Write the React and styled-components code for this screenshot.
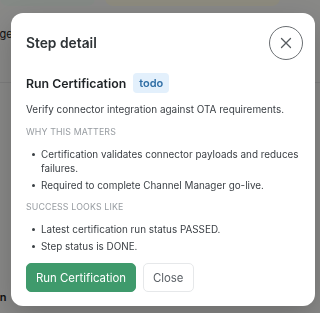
import React from 'react'
import styled, { createGlobalStyle } from 'styled-components'

const Global = createGlobalStyle`
  html, body { margin: 0; padding: 0; }
  body {
    width: 320px;
    height: 313px;
    overflow: hidden;
    font-family: Inter, "Noto Sans", sans-serif;
    background: #fff;
  }
`

const Page = styled.div`
  width: 320px;
  height: 313px;
  display: flex;
  flex-direction: column;
  background: #f7f7f5;
  overflow: hidden;
`

const TopBar = styled.div`
  display: flex;
  gap: 10px;
  height: 12px;
  margin-top: -6px;
`

const TopCard = styled.div`
  width: ${p => p.w}px;
  background: ${p => p.bg};
  border-radius: 0 0 8px 8px;
`

const SideList = styled.div`
  flex: 1;
  display: flex;
  flex-direction: column;
  margin-left: -28px;
  padding-top: 12px;
`

const SideRow = styled.div`
  height: 32px;
  flex-shrink: 0;
  display: flex;
  align-items: center;
  font-size: 11px;
  color: ${p => (p.muted ? '#9aa0a6' : '#222')};
  font-weight: ${p => (p.bold ? 600 : 400)};
  border-bottom: ${p => (p.line ? '1px solid #e3e3e3' : 'none')};
  margin-top: ${p => (p.bottom ? 'auto' : '0')};
`

const Overlay = styled.div`
  position: fixed;
  inset: 0;
  background: rgba(0, 0, 0, 0.45);
  padding: 13px 5px 7px 11px;
  box-sizing: border-box;
  display: flex;
`

const Modal = styled.div`
  flex: 1;
  background: #fff;
  border-radius: 12px;
  padding: 13px 12px 15px 15px;
  display: flex;
  flex-direction: column;
  box-shadow: 0 10px 30px rgba(0, 0, 0, 0.2);
`

const Header = styled.div`
  display: flex;
  align-items: center;
  justify-content: space-between;
  height: 34px;
`

const Title = styled.h2`
  margin: 0;
  font-size: 13.8px;
  font-weight: 600;
  color: #2f3437;
`

const CloseCircle = styled.button`
  width: 34px;
  height: 34px;
  border-radius: 50%;
  border: 1px solid #6b6f73;
  background: #fff;
  display: flex;
  align-items: center;
  justify-content: center;
  padding: 0;
  color: #555a5e;
`

const StepRow = styled.div`
  display: flex;
  align-items: center;
  gap: 7px;
  margin-top: 13px;
  height: 20px;
`

const StepName = styled.div`
  font-size: 12.3px;
  font-weight: 600;
  color: #1f2326;
`

const Badge = styled.span`
  background: #e3f0fc;
  color: #2f6ea5;
  font-size: 11px;
  font-weight: 600;
  border-radius: 4px;
  padding: 0 6px;
  height: 20px;
  line-height: 20px;
`

const Desc = styled.p`
  margin: 8px 0 0;
  font-size: 9.95px;
  line-height: 16px;
  color: #3a3f44;
`

const Label = styled.div`
  margin-top: 8px;
  font-size: 8.8px;
  line-height: 14px;
  letter-spacing: 0.15px;
  color: #979ca1;
  text-transform: uppercase;
`

const List = styled.ul`
  margin: 8px 0 0;
  padding: 0;
  list-style: none;
  display: flex;
  flex-direction: column;
  gap: 3px;
`

const Item = styled.li`
  position: relative;
  padding-left: 15px;
  padding-right: 4px;
  font-size: 9.9px;
  line-height: 14px;
  color: #3a3f44;
  &::before {
    content: '';
    position: absolute;
    left: 6px;
    top: 6px;
    width: 3px;
    height: 3px;
    border-radius: 50%;
    background: #3a3f44;
  }
`

const Actions = styled.div`
  display: flex;
  gap: 7px;
  margin-top: 10px;
`

const Button = styled.button`
  height: 29px;
  padding: 0 9px;
  border-radius: 5px;
  font-family: inherit;
  font-size: 11.4px;
  border: 1px solid ${p => (p.primary ? '#3f9a6c' : '#e6e8ea')};
  background: ${p => (p.primary ? '#3f9a6c' : '#fff')};
  color: ${p => (p.primary ? '#fff' : '#5b6066')};
`

export default function App() {
  return (
    <>
      <Global />
      <Page>
        <TopBar>
          <TopCard w={95} bg="#f1faf3" />
          <TopCard w={175} bg="#fffbe6" />
        </TopBar>
        <SideList>
          <SideRow>Storage</SideRow>
          <SideRow muted line>Spec</SideRow>
          <SideRow bold bottom>Action</SideRow>
        </SideList>
      </Page>
      <Overlay>
        <Modal>
          <Header>
            <Title>Step detail</Title>
            <CloseCircle aria-label="Close">
              <svg width="14" height="14" viewBox="0 0 14 14" fill="none" stroke="currentColor" strokeWidth="1.3" strokeLinecap="round">
                <path d="M2.5 2.5l9 9M11.5 2.5l-9 9" />
              </svg>
            </CloseCircle>
          </Header>
          <StepRow>
            <StepName>Run Certification</StepName>
            <Badge>todo</Badge>
          </StepRow>
          <Desc>Verify connector integration against OTA requirements.</Desc>
          <Label>Why this matters</Label>
          <List>
            <Item>Certification validates connector payloads and reduces failures.</Item>
            <Item>Required to complete Channel Manager go-live.</Item>
          </List>
          <Label>Success looks like</Label>
          <List>
            <Item>Latest certification run status PASSED.</Item>
            <Item>Step status is DONE.</Item>
          </List>
          <Actions>
            <Button primary>Run Certification</Button>
            <Button>Close</Button>
          </Actions>
        </Modal>
      </Overlay>
    </>
  )
}
